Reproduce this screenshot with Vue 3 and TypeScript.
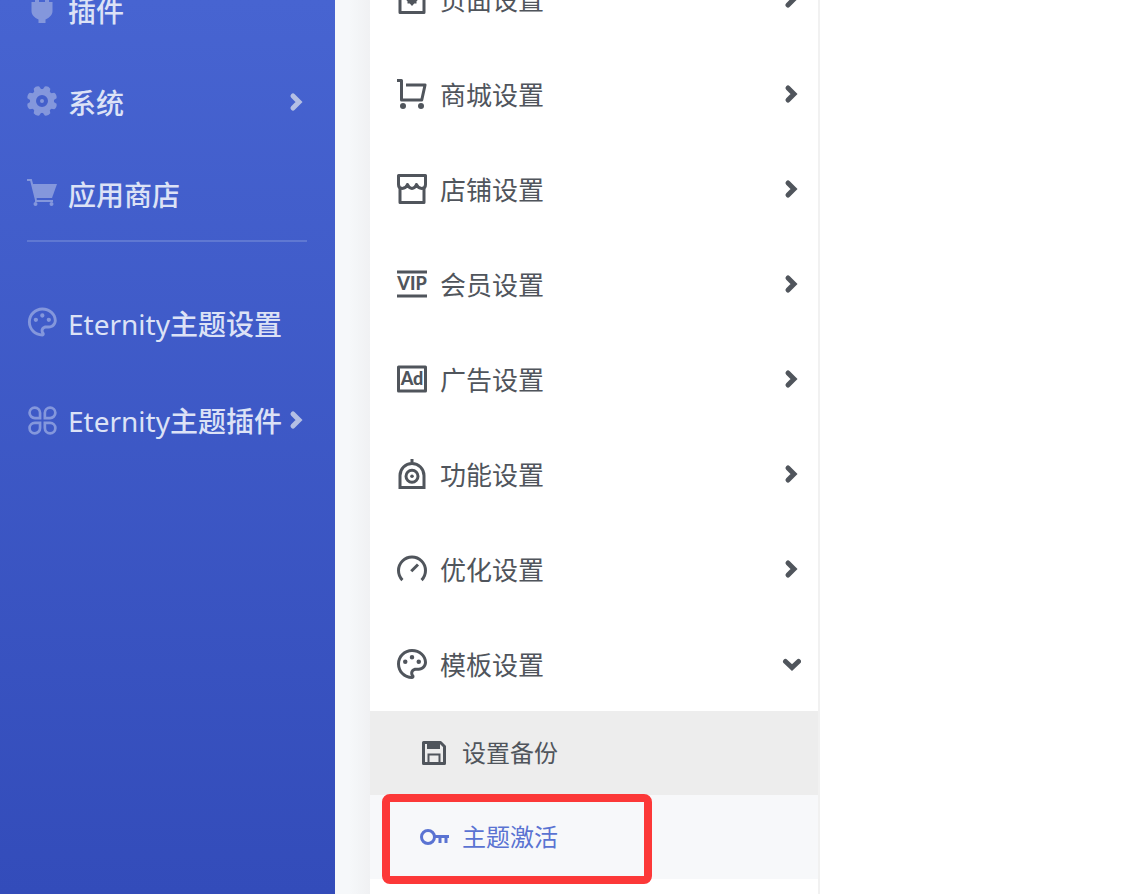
<script setup lang="ts">
import { ref } from 'vue'

interface SideItem {
  label: string
  icon: string
  brand?: string
  arrow?: boolean
}

interface Section {
  label: string
  icon: string
}

const coreItems: SideItem[] = [
  { label: '插件', icon: 'plug' },
  { label: '系统', icon: 'gear', arrow: true },
  { label: '应用商店', icon: 'cart' },
]

const themeItems: SideItem[] = [
  { brand: 'Eternity', label: '主题设置', icon: 'palette' },
  { brand: 'Eternity', label: '主题插件', icon: 'petals', arrow: true },
]

const sections: Section[] = [
  { label: '页面设置', icon: 'page' },
  { label: '商城设置', icon: 'shop' },
  { label: '店铺设置', icon: 'store' },
  { label: '会员设置', icon: 'vip' },
  { label: '广告设置', icon: 'ad' },
  { label: '功能设置', icon: 'function' },
  { label: '优化设置', icon: 'gauge' },
  { label: '模板设置', icon: 'palette' },
]

const openSection = ref('模板设置')

function toggle(label: string): void {
  openSection.value = openSection.value === label ? '' : label
}

const palettePath =
  'M12 2C17.5222 2 22 5.97778 22 10.8889C22 13.9556 19.5111 16.4444 16.4444 16.4444H14.4778C13.5556 16.4444 12.8111 17.1889 12.8111 18.1111C12.8111 18.5333 12.9778 18.9222 13.2333 19.2111C13.5 19.5111 13.6667 19.9 13.6667 20.3333C13.6667 21.2556 12.9 22 12 22C6.47778 22 2 17.5222 2 12C2 6.47778 6.47778 2 12 2ZM10.8111 18.1111C10.8111 16.0889 12.4556 14.4444 14.4778 14.4444H16.4444C18.4065 14.4444 20 12.851 20 10.8889C20 7.1392 16.4677 4 12 4C7.58235 4 4 7.58235 4 12C4 16.19 7.2226 19.6285 11.324 19.9718C10.9948 19.4168 10.8111 18.7761 10.8111 18.1111ZM7.5 12A1.5 1.5 0 1 1 7.5 9A1.5 1.5 0 0 1 7.5 12ZM16.5 12A1.5 1.5 0 1 1 16.5 9A1.5 1.5 0 0 1 16.5 12ZM12 9A1.5 1.5 0 1 1 12 6A1.5 1.5 0 0 1 12 9Z'
</script>

<template>
  <div class="page">
    <nav class="sidebar" aria-label="主菜单">
      <ul class="side-list core">
        <li v-for="item in coreItems" :key="item.label">
          <a class="side-link" href="#">
            <svg class="side-icon" viewBox="0 0 36 36" aria-hidden="true">
              <path
                v-if="item.icon === 'plug'"
                fill="currentColor"
                d="M11 2h4v8h6V2h4v8h3.500v9c0 4-3 6.500-7 8.500V31h-7v-3.500c-4-2-7-4.500-7-8.500v-9H11z"
              />
              <template v-else-if="item.icon === 'gear'">
                <g fill="currentColor">
                  <circle cx="18" cy="17" r="12" />
                  <path
                    v-for="n in 8"
                    :key="n"
                    d="M14 7l1-4.500Q18 .6 21 2.500L22 7z"
                    :transform="`rotate(${n * 45 - 22.5} 18 17)`"
                  />
                </g>
                <circle class="gear-hole" cx="18" cy="17" r="4" />
              </template>
              <g v-else-if="item.icon === 'cart'" fill="none" stroke="currentColor">
                <path d="M3 4h4l5 20" stroke-width="2" />
                <path d="M8 8h25l-5 14H11z" fill="currentColor" stroke="none" />
                <path d="M11 25h18" stroke-width="2" />
                <circle cx="11.500" cy="28" r="2" fill="currentColor" stroke="none" />
                <circle cx="27.500" cy="28" r="2" fill="currentColor" stroke="none" />
              </g>
            </svg>
            <span class="side-label">{{ item.label }}</span>
            <svg v-if="item.arrow" class="side-arrow" viewBox="0 0 14 20" aria-hidden="true">
              <path d="M4 4l6 6-6 6" />
            </svg>
          </a>
        </li>
      </ul>
      <hr class="divider" />
      <ul class="side-list theme">
        <li v-for="item in themeItems" :key="item.label">
          <a class="side-link" href="#">
            <svg class="side-icon" viewBox="0 0 24 24" aria-hidden="true">
              <path
                v-if="item.icon === 'palette'"
                fill="currentColor"
                transform="translate(.7 -.2) scale(.96)"
                :d="palettePath"
              />
              <g v-else fill="none" stroke="currentColor" stroke-width="1.800">
                <path d="M10.700 10.700H7.200A3.500 3.500 0 1 1 10.700 7.200Z" />
                <path d="M13.900 10.700H17.400A3.500 3.500 0 1 0 13.900 7.200Z" />
                <path d="M10.700 13.900H7.200A3.500 3.500 0 1 0 10.700 17.400Z" />
                <path d="M13.900 13.900H17.400A3.500 3.500 0 1 1 13.900 17.400Z" />
              </g>
            </svg>
            <span class="side-label"><span class="brand">{{ item.brand }}</span>{{ item.label }}</span>
            <svg v-if="item.arrow" class="side-arrow" viewBox="0 0 14 20" aria-hidden="true">
              <path d="M4 4l6 6-6 6" />
            </svg>
          </a>
        </li>
      </ul>
    </nav>

    <div class="gutter"></div>

    <aside class="panel">
      <ul class="sections">
        <li v-for="section in sections" :key="section.label">
          <button
            type="button"
            class="section"
            :aria-expanded="openSection === section.label"
            @click="toggle(section.label)"
          >
            <svg class="section-icon" viewBox="0 0 24 24" aria-hidden="true">
              <g v-if="section.icon === 'page'" fill="none" stroke="currentColor" stroke-width="2">
                <path d="M4 3h16v18H4z" stroke-linejoin="round" />
                <path fill="currentColor" stroke="none" d="M12 16.600l-1.500-1.600H9v-1.500L7.500 12 9 10.500V9h1.500L12 7.500 13.500 9H15v1.500l1.500 1.500-1.500 1.500V15h-1.500z" />
              </g>
              <g v-else-if="section.icon === 'shop'" fill="none" stroke="currentColor" stroke-width="2">
                <path d="M2 3h3v13h13.500L20.700 6H8" stroke-linejoin="round" />
                <circle cx="6" cy="20" r="2" fill="currentColor" stroke="none" />
                <circle cx="18" cy="20" r="2" fill="currentColor" stroke="none" />
              </g>
              <g v-else-if="section.icon === 'store'" fill="none" stroke="currentColor" stroke-width="2" stroke-linejoin="round">
                <path d="M3 3h18v6c0 3.500-4.500 3.500-6 0-1.500 3.500-4.500 3.500-6 0-1.500 3.500-6 3.500-6 0z" />
                <path d="M4 11v10h16V11" />
              </g>
              <g v-else-if="section.icon === 'vip'">
                <path d="M2 3h20v2H2zM2 19h20v2H2z" fill="currentColor" />
                <text class="glyph" x="12" y="16" text-anchor="middle">VIP</text>
              </g>
              <g v-else-if="section.icon === 'ad'">
                <path d="M3 4h18v16H3z" fill="none" stroke="currentColor" stroke-width="2" stroke-linejoin="round" />
                <text class="glyph" x="12" y="16" text-anchor="middle">Ad</text>
              </g>
              <g v-else-if="section.icon === 'function'" fill="none" stroke="currentColor" stroke-width="2">
                <path d="M4 21v-8a8 8 0 0 1 16 0v8zM12 2v3" />
                <circle cx="12" cy="13.500" r="4" />
                <circle cx="12" cy="13.500" r="1.200" fill="currentColor" stroke="none" />
              </g>
              <g v-else-if="section.icon === 'gauge'" fill="none" stroke="currentColor" stroke-width="2">
                <path d="M5.600 19.400A9 9 0 1 1 18.400 19.400" />
                <path d="M11.500 13.500l4.500-4.500" />
              </g>
              <path v-else fill="currentColor" :d="palettePath" />
            </svg>
            <span class="section-label">{{ section.label }}</span>
            <svg class="chevron" viewBox="0 0 20 20" aria-hidden="true">
              <path v-if="openSection === section.label" d="M4.500 7.500l6.500 6 6.500-6" />
              <path v-else d="M7 4l6 6-6 6" />
            </svg>
          </button>
          <ul v-if="section.label === '模板设置' && openSection === section.label" class="children">
            <li>
              <a class="child" href="#">
                <svg class="child-icon" viewBox="0 0 30 30" aria-hidden="true">
                  <path d="M3.500 4.500h17l4 4v17h-21z" fill="none" stroke="currentColor" stroke-width="3" stroke-linejoin="round" />
                  <path d="M7 4h13v7H7z" fill="currentColor" />
                  <path d="M8.500 25v-8.500h11V25" fill="none" stroke="currentColor" stroke-width="2" />
                </svg>
                <span class="child-label">设置备份</span>
              </a>
            </li>
            <li>
              <a class="child active" href="#" aria-current="page">
                <svg class="child-icon" viewBox="0 0 30 30" aria-hidden="true">
                  <g fill="none" stroke="currentColor" stroke-width="3">
                    <circle cx="8" cy="15" r="6.500" />
                    <path d="M14.500 14.500H29M20 15v6M26 15v6" />
                  </g>
                </svg>
                <span class="child-label">主题激活</span>
                <i class="marker"></i>
              </a>
            </li>
          </ul>
        </li>
      </ul>
    </aside>

    <main class="content"></main>
  </div>
</template>

<style>
body {
  margin: 0;
  background: #fff;
}
</style>

<style scoped>
.page {
  display: flex;
  min-height: 100vh;
  overflow: hidden;
  font-family: "Noto Sans", "Noto Sans CJK SC", sans-serif;
}

ul {
  margin: 0;
  padding: 0;
  list-style: none;
}

.sidebar {
  flex: 0 0 335px;
  box-sizing: border-box;
  background: linear-gradient(#4764d1, #334cba);
}

.core {
  margin-top: -36px;
}

.side-link {
  display: flex;
  align-items: center;
  height: 92px;
  padding: 0 32px 0 24px;
  color: #dce2f6;
  font-size: 28px;
  font-weight: 500;
  line-height: 40px;
  text-decoration: none;
  white-space: nowrap;
}

.side-label {
  margin-left: 8px;
  padding-top: 2px;
}

.brand {
  font-weight: 400;
}

.theme .side-link {
  height: 97px;
}

.side-icon {
  flex: none;
  width: 36px;
  height: 36px;
  color: #8497dc;
}

.gear-hole {
  fill: #8497dc;
  stroke: #435fcb;
  stroke-width: 4px;
}

.side-arrow {
  flex: none;
  width: 14px;
  height: 20px;
  margin-left: auto;
  fill: none;
  stroke: #b4bfe4;
  stroke-width: 5px;
}

.divider {
  height: 2px;
  margin: 0 28px 32px 27px;
  border: 0;
  background: #5f78d2;
}

.gutter {
  flex: 0 0 35px;
  background: linear-gradient(90deg, #f6f8fa 40%, #f0f1f3);
}

.panel {
  flex: 0 0 448px;
  border-right: 2px solid #f1f1f1;
}

.sections {
  margin-top: -49px;
}

.section {
  display: flex;
  align-items: center;
  width: 100%;
  height: 95px;
  margin: 0;
  padding: 0 17px 0 24px;
  border: 0;
  background: #fff;
  color: #50555c;
  font: inherit;
  font-size: 26px;
  line-height: 38px;
  cursor: pointer;
}

.section-label {
  margin-left: 10px;
  padding-top: 2px;
}

.section-icon {
  width: 36px;
  height: 36px;
}

.glyph {
  fill: currentColor;
  font-family: Lato, sans-serif;
  font-size: 12px;
  font-weight: 900;
}

.chevron {
  width: 20px;
  height: 20px;
  margin-left: auto;
  fill: none;
  stroke: currentColor;
  stroke-width: 5px;
}

.side-arrow,
.chevron {
  stroke-linecap: round;
}

.child {
  position: relative;
  display: flex;
  align-items: center;
  height: 84px;
  padding-left: 50px;
  background: #ededed;
  color: #50555c;
  font-size: 24px;
  line-height: 36px;
  text-decoration: none;
}

.child.active {
  background: #f7f8fa;
  color: #5a73d2;
}

.child-icon {
  width: 30px;
  height: 30px;
}

.child-label {
  margin-left: 12px;
}

.marker {
  position: absolute;
  top: -1px;
  left: 12px;
  box-sizing: border-box;
  width: 270px;
  height: 90px;
  border: 8px solid #fc3838;
  border-radius: 8px;
  pointer-events: none;
}

.content {
  flex: 1;
  background: #fff;
}
</style>
